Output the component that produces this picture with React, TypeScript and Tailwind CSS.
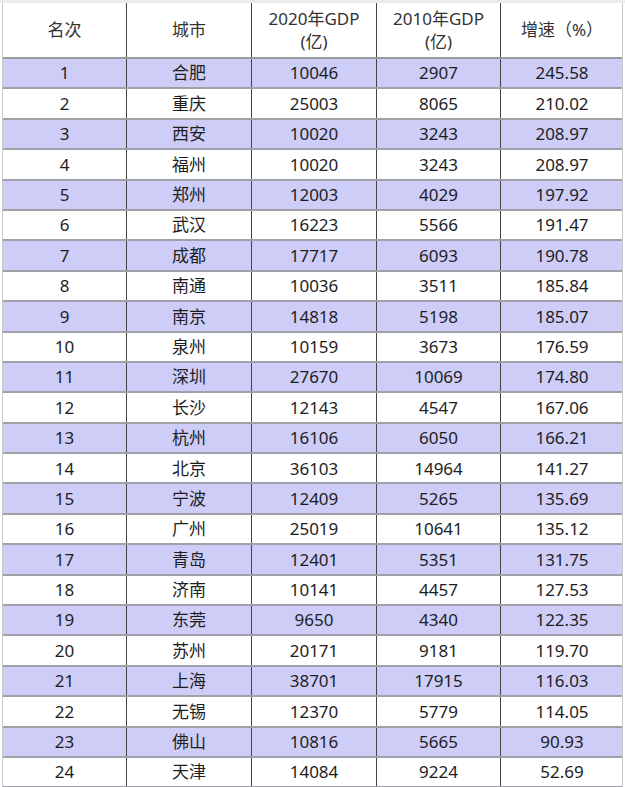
const rows: [string, string, string, string, string][] = [
  ["1", "合肥", "10046", "2907", "245.58"],
  ["2", "重庆", "25003", "8065", "210.02"],
  ["3", "西安", "10020", "3243", "208.97"],
  ["4", "福州", "10020", "3243", "208.97"],
  ["5", "郑州", "12003", "4029", "197.92"],
  ["6", "武汉", "16223", "5566", "191.47"],
  ["7", "成都", "17717", "6093", "190.78"],
  ["8", "南通", "10036", "3511", "185.84"],
  ["9", "南京", "14818", "5198", "185.07"],
  ["10", "泉州", "10159", "3673", "176.59"],
  ["11", "深圳", "27670", "10069", "174.80"],
  ["12", "长沙", "12143", "4547", "167.06"],
  ["13", "杭州", "16106", "6050", "166.21"],
  ["14", "北京", "36103", "14964", "141.27"],
  ["15", "宁波", "12409", "5265", "135.69"],
  ["16", "广州", "25019", "10641", "135.12"],
  ["17", "青岛", "12401", "5351", "131.75"],
  ["18", "济南", "10141", "4457", "127.53"],
  ["19", "东莞", "9650", "4340", "122.35"],
  ["20", "苏州", "20171", "9181", "119.70"],
  ["21", "上海", "38701", "17915", "116.03"],
  ["22", "无锡", "12370", "5779", "114.05"],
  ["23", "佛山", "10816", "5665", "90.93"],
  ["24", "天津", "14084", "9224", "52.69"],
]

const cols = "grid grid-cols-[123px_125px_125px_124px_123px]"

export default function App() {
  return (
    <div
      className="w-[625px] h-[787px] overflow-hidden bg-white text-[#1e1e1e]"
      style={{ fontFamily: '"Noto Sans", "Noto Sans CJK SC", sans-serif' }}
    >
      <div className="h-[3px] bg-[#ececec]" />
      <div className="ml-[2px] w-[621px] border-l border-r border-[#c8c8c8]">
        {/* header */}
        <div className={`${cols} h-[56px] border-b-2 border-[#9a9a9a] text-[17px] text-[#333]`}>
          <div className="flex items-center justify-center">名次</div>
          <div className="flex items-center justify-center border-l border-[#444]">城市</div>
          <div className="flex flex-col items-center justify-center border-l border-[#444] leading-[23px]">
            <span>2020年GDP</span>
            <span>(亿)</span>
          </div>
          <div className="flex flex-col items-center justify-center border-l border-[#444] leading-[23px]">
            <span>2010年GDP</span>
            <span>(亿)</span>
          </div>
          <div className="flex items-center justify-center border-l border-[#444]">增速（%）</div>
        </div>
        {rows.map((r, i) => (
          <div
            key={r[0]}
            className={`${cols} h-[30.4px] border-b-2 border-[#a0a0a8] text-[17px] ${
              i % 2 === 0 ? "bg-[#cdcdf8]" : "bg-white"
            }`}
          >
            {r.map((c, j) => (
              <div
                key={j}
                className={`flex items-center justify-center ${j > 0 ? "border-l border-[#444]" : ""}`}
              >
                {c}
              </div>
            ))}
          </div>
        ))}
      </div>
    </div>
  )
}
